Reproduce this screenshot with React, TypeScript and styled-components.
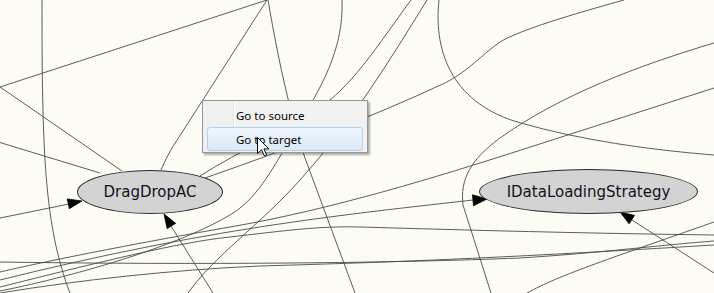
import React from 'react';
import styled, { createGlobalStyle, css } from 'styled-components';

const GlobalStyle = createGlobalStyle`
    html, body {
        margin: 0;
        padding: 0;
        background: #fcfcf4;
        overflow: hidden;
    }
`;

const Canvas = styled.div`
    position: relative;
    width: 714px;
    height: 293px;
    background: #fcfcf4;
    overflow: hidden;
`;

const EdgeLayer = styled.svg`
    position: absolute;
    left: 0;
    top: 0;
    width: 714px;
    height: 293px;
`;

const Node = styled.div<{ $x: number; $y: number; $w: number; $h: number }>`
    position: absolute;
    left: ${(p) => p.$x}px;
    top: ${(p) => p.$y}px;
    width: ${(p) => p.$w}px;
    height: ${(p) => p.$h}px;
    box-sizing: border-box;
    border: 1px solid #2b2b2b;
    border-radius: 50%;
    background: #d3d3d3;
    display: flex;
    align-items: center;
    justify-content: center;
    font-family: "DejaVu Sans", Verdana, sans-serif;
    font-size: 15px;
    color: #12121e;
`;

const Menu = styled.div`
    position: absolute;
    left: 202px;
    top: 100px;
    width: 166px;
    box-sizing: border-box;
    padding: 2px 2px 1px;
    border: 1px solid #979797;
    background: linear-gradient(to right, #f0f0f0 0 30px, #e2e3e3 30px 31px, #ffffff 31px 32px, #f2f2f2 32px);
    box-shadow: 2px 2px 2px rgba(0, 0, 0, 0.32);
    font-family: "Noto Sans", "Segoe UI", sans-serif;
    font-size: 11.5px;
    color: #000;
`;

const MenuItem = styled.div<{ $active?: boolean }>`
    height: 24px;
    box-sizing: border-box;
    margin: 0 2px;
    padding-left: 28px;
    display: flex;
    align-items: center;
    border: 1px solid transparent;
    border-radius: 3px;
    ${(p) => p.$active && css`
        border-color: #aed3f0;
        background: linear-gradient(to bottom, #eef5fc, #dce9f5);
    `}
`;

const Pointer = styled.svg`
    position: absolute;
    left: 257px;
    top: 137px;
    width: 13px;
    height: 20px;
`;

const edges = [
    'M42 0 C42 150 44 225 70 293',
    'M0 87 L267 0',
    'M0 87 L122 171',
    'M-5 141 L100 173',
    'M267 0 L172 148 Q166 158 161 170',
    'M268 0 C280 70 292 120 305 158 L355 293',
    'M342 0 C344 50 320 90 295 130 C270 175 255 200 230 215 C180 245 80 275 0 291',
    'M427 0 C390 60 350 125 300 180 C260 225 215 255 188 293',
    'M411 0 C385 35 360 75 330 100 C290 130 240 150 200 176',
    'M439 0 C433 55 455 105 521 123 C580 140 650 150 714 155',
    'M624 0 C570 15 520 30 500 42 C480 56 470 70 445 83 C370 118 280 152 205 178',
    'M714 43 C640 65 560 95 500 138 C470 160 460 180 463 205 L491 293',
    'M714 88 L521 150 C440 176 330 210 230 227 C150 241 60 258 0 272',
    'M0 280 C100 255 200 235 300 221 C380 210 430 205 473 200',
    'M0 287 C100 262 180 242 230 237 C290 230 320 226 360 227 C430 229 560 233 714 235',
    'M0 262 C200 265 400 263 520 258 C600 253 660 245 714 241',
    'M0 293 C80 280 170 270 260 266 C400 262 500 258 714 245',
    'M527 293 C560 275 600 262 714 222',
    'M714 273 L632 220',
    'M0 218 L69 204',
    'M213 293 L171 226',
];

const arrows = [
    '82,201 69.3,208.7 67.3,198.9',
    '164,214 175.7,223.3 167.2,228.6',
    '487,199 473.5,205.8 472.5,194.8',
    '620,212 634.5,215.4 629.1,223.8',
];

export const App = () => {
    return (
        <>
            <GlobalStyle />
            <Canvas>
                <EdgeLayer viewBox={'0 0 714 293'}>
                    {edges.map((d, i) => (
                        <path key={i} d={d} fill={'none'} stroke={'#4a4a4a'} strokeWidth={0.9} />
                    ))}
                    {arrows.map((pts, i) => (
                        <polygon key={i} points={pts} fill={'#000'} stroke={'#000'} strokeWidth={0.8} />
                    ))}
                </EdgeLayer>
                <Node $x={77} $y={170} $w={146} $h={44}>{'DragDropAC'}</Node>
                <Node $x={479} $y={169} $w={219} $h={45}>{'IDataLoadingStrategy'}</Node>
                <Menu>
                    <MenuItem>{'Go to source'}</MenuItem>
                    <MenuItem $active>{'Go to target'}</MenuItem>
                </Menu>
                <Pointer viewBox={'0 0 13 20'}>
                    <path
                        d={'M0.5 0.5 L0.5 16.5 L4.5 12.8 L7.3 18.8 L9.6 17.8 L6.9 11.9 L11.8 11.9 Z'}
                        fill={'#fff'}
                        stroke={'#000'}
                        strokeWidth={1}
                        strokeLinejoin={'miter'}
                    />
                </Pointer>
            </Canvas>
        </>
    );
};

export default App;
